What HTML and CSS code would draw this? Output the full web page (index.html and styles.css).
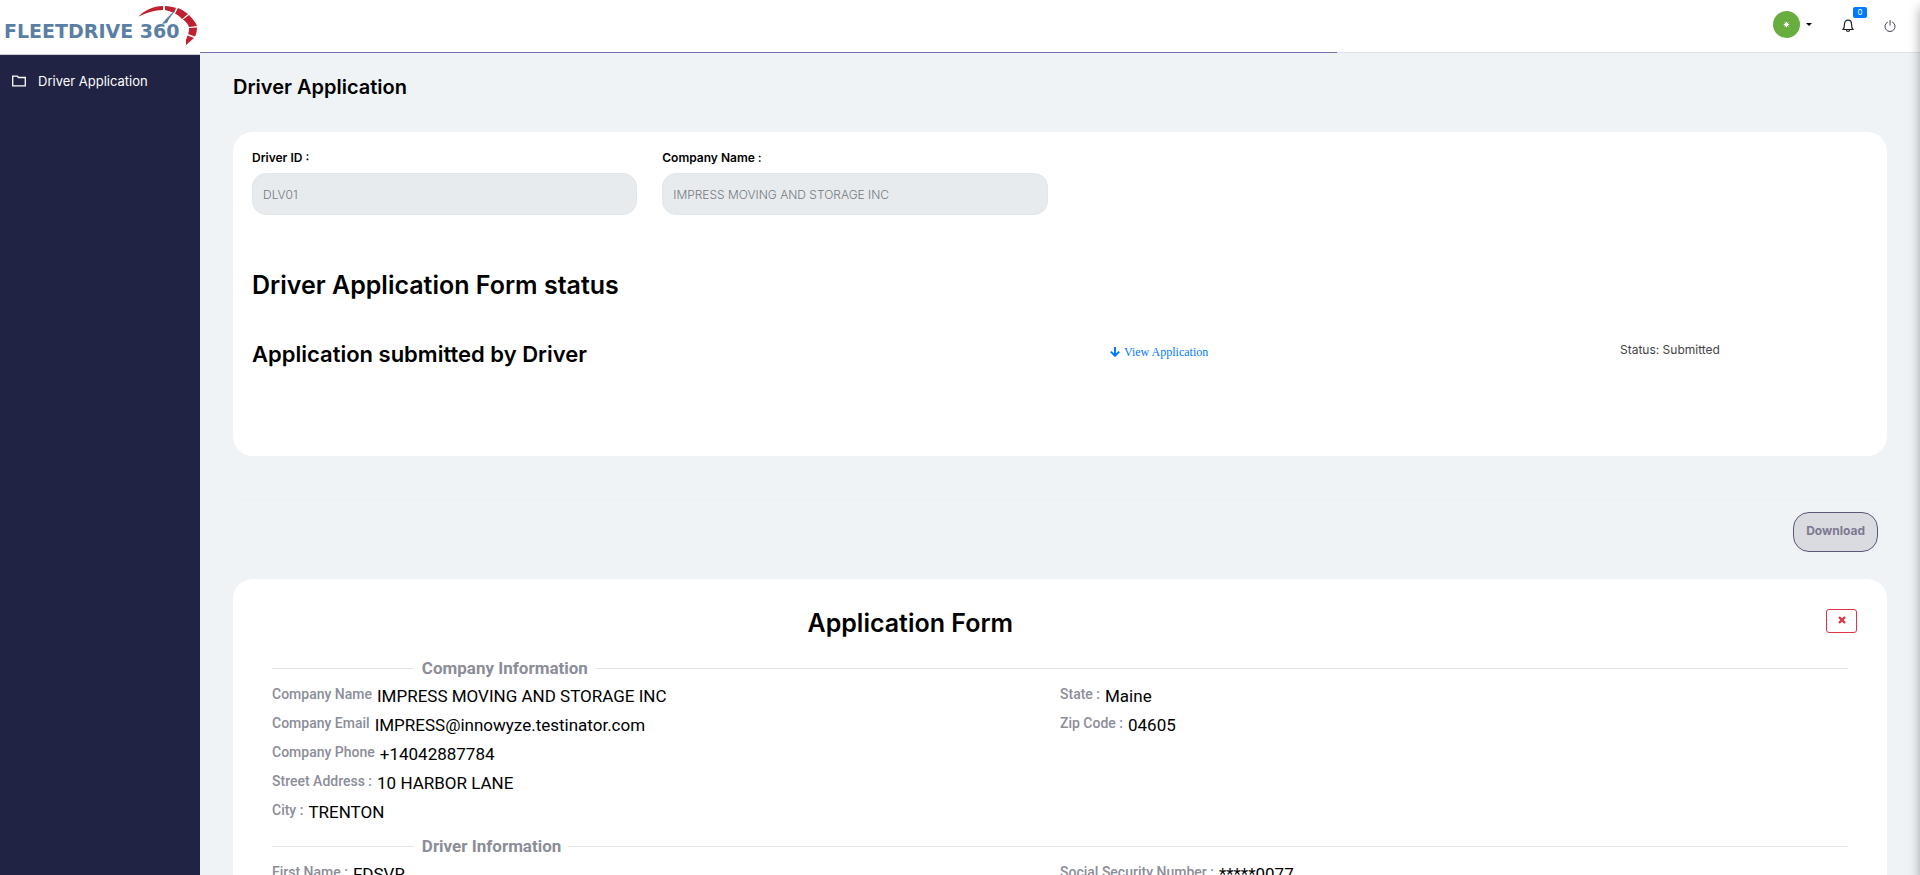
FILE: index.html
```html
<!DOCTYPE html>
<html lang="en">
<head>
<meta charset="utf-8">
<meta name="viewport" content="width=device-width, initial-scale=1">
<title>FleetDrive 360 - Driver Application</title>
<link rel="stylesheet" href="styles.css">
</head>
<body>
<div class="app">
  <aside class="sidebar">
    <a class="logo" href="#" aria-label="FleetDrive 360 home">
      <svg class="logo-gauge" viewBox="0 0 60 40" aria-hidden="true">
        <path fill="#c1202e" d="M0 12C7 5 15 1 25 1v4C16 5 8 8 0 12zM27 1c4 0 8 1 11 2l-2 5c-3-1.500-6-2.500-9-3zM40 3c4 1.500 7 4 10 6l-6 5c-2-2-4-4-7-5.500zM51 10c4 4 7 8 8 11l-8 1c-1-3-3-5-6-7.500zM51 23l8-.500c0 4-1 7-2 9l-7-2.500c1-2 1-4 1-6zM49.500 30.500l6.500 2.500-8 7v-5z"/>
        <path fill="#5a7ea4" d="M39 3L31 14l-2 4-5 1 4-5z"/>
      </svg>
      <span class="logo-text">FLEETDRIVE 360</span>
    </a>
    <nav>
      <a class="nav-item" href="#">
        <svg class="nav-icon" viewBox="0 0 14 12" aria-hidden="true"><path d="M.7 10.800V1.200h4.600l1.200 1.300h6.800v8.300z" fill="none" stroke="currentColor" stroke-width="1.300"/></svg>
        Driver Application
      </a>
    </nav>
  </aside>

  <div class="page">
    <header class="topbar">
      <div class="progress"></div>
      <button class="user" type="button" aria-label="Account menu">
        <span class="avatar"><svg viewBox="0 0 8 8" aria-hidden="true"><circle cx="4" cy="4" r="2.200" fill="#fff"/><path d="M4 .8v6.400M.8 4h6.400M1.700 1.700l4.600 4.600M6.300 1.700L1.700 6.300" stroke="#fff" stroke-width="1"/></svg></span>
        <span class="caret"></span>
      </button>
      <button class="icon-button bell" type="button" aria-label="Notifications">
        <svg viewBox="0 0 12 14" aria-hidden="true"><path d="M1 10.500c1-1 1.500-2 1.500-5.500C2.500 2.500 4 1.200 6 1.200S9.500 2.500 9.500 5c0 3.500.5 4.500 1.500 5.500zM4.500 11c0 2 3 2 3 0" fill="none" stroke="#222" stroke-width="1.200"/></svg>
        <span class="badge">0</span>
      </button>
      <button class="icon-button" type="button" aria-label="Log out">
        <svg viewBox="0 0 12 14" aria-hidden="true"><path d="M3.800 3a5 5 0 1 0 4.400 0M6 1v5.500" fill="none" stroke="#434057" stroke-width="1"/></svg>
      </button>
    </header>

    <main class="content">
      <h1 class="page-title">Driver Application</h1>

      <section class="card status-card">
        <div class="fields">
          <div class="field">
            <label for="driver-id">Driver ID :</label>
            <input id="driver-id" type="text" value="DLV01" disabled>
          </div>
          <div class="field">
            <label for="company">Company Name :</label>
            <input id="company" type="text" value="IMPRESS MOVING AND STORAGE INC" disabled>
          </div>
        </div>
        <h2 class="status-title">Driver Application Form status</h2>
        <div class="status-row">
          <h3 class="status-name">Application submitted by Driver</h3>
          <a class="view-link" href="#form"><svg viewBox="0 0 10 10" aria-hidden="true"><path d="M5 0v8M.8 4.600L5 8.800l4.200-4.200" fill="none" stroke="currentColor" stroke-width="2"/></svg>View Application</a>
          <span class="status-value">Status: Submitted</span>
        </div>
      </section>

      <div class="actions">
        <button class="download" type="button" disabled>Download</button>
      </div>

      <section class="card form-card" id="form">
        <div class="form-head">
          <h2 class="form-title">Application Form</h2>
          <button class="close" type="button" aria-label="Close"><svg viewBox="0 0 8 8" aria-hidden="true"><path d="M1 1l6 6M7 1L1 7" stroke="currentColor" stroke-width="2.400"/></svg></button>
        </div>

        <h3 class="divider">Company Information</h3>
        <div class="details">
          <dl>
            <div class="row"><dt>Company Name</dt><dd>IMPRESS MOVING AND STORAGE INC</dd></div>
            <div class="row"><dt>Company Email</dt><dd>IMPRESS@innowyze.testinator.com</dd></div>
            <div class="row"><dt>Company Phone</dt><dd>+14042887784</dd></div>
            <div class="row"><dt>Street Address :</dt><dd>10 HARBOR LANE</dd></div>
            <div class="row"><dt>City :</dt><dd>TRENTON</dd></div>
          </dl>
          <dl>
            <div class="row"><dt>State :</dt><dd>Maine</dd></div>
            <div class="row"><dt>Zip Code :</dt><dd>04605</dd></div>
          </dl>
        </div>

        <h3 class="divider">Driver Information</h3>
        <div class="details">
          <dl>
            <div class="row"><dt>First Name :</dt><dd>FDSVR</dd></div>
          </dl>
          <dl>
            <div class="row"><dt>Social Security Number :</dt><dd>*****0077</dd></div>
          </dl>
        </div>
      </section>
    </main>
  </div>
  <div class="edge-shadow"></div>
</div>
</body>
</html>
```
FILE: styles.css
```css
* { box-sizing: border-box; }

body, h1, h2, h3, dl, dd { margin: 0; }

body {
  font-family: Inter, "Open Sans", sans-serif;
  color: #000;
  background: #eff3f6;
}

a { text-decoration: none; }

button {
  font-family: inherit;
  padding: 0;
  border: 0;
  background: none;
}

h1, h2, h3 { font-weight: 600; }

.app {
  position: relative;
  display: flex;
  height: 100vh;
  overflow: hidden;
}

/* Sidebar */
.sidebar {
  flex: 0 0 200px;
  background: #202344;
}

.logo {
  position: relative;
  display: flex;
  height: 55px;
  padding: 20px 4px 0;
  background: #fff;
  border-bottom: 1px solid #ccc;
}

.logo-text {
  font: bold 19px/22px "DejaVu Sans", sans-serif;
  color: #5a7ea4;
  white-space: nowrap;
}

.logo-gauge {
  position: absolute;
  top: 5px;
  left: 138px;
  width: 60px;
  height: 40px;
}

.nav-item {
  display: flex;
  align-items: center;
  gap: 12px;
  height: 51px;
  padding: 0 12px;
  font-size: 13px;
  color: #fff;
}

.nav-icon {
  width: 14px;
  height: 12px;
}

/* Top bar */
.page {
  display: flex;
  flex: 1;
  flex-direction: column;
  min-width: 0;
}

.topbar {
  position: relative;
  display: flex;
  flex: none;
  align-items: center;
  justify-content: flex-end;
  gap: 30px;
  height: 53px;
  padding: 0 24px 3px 0;
  background: #fff;
  border-bottom: 1px solid #dbe2ea;
}

.progress {
  position: absolute;
  bottom: -1px;
  left: 0;
  width: 66.1%;
  height: 1px;
  background: #7474aa;
}

.user {
  display: flex;
  align-items: center;
  gap: 6px;
}

.avatar {
  display: grid;
  place-items: center;
  width: 27px;
  height: 27px;
  border-radius: 50%;
  background: #67ad3f;
}

.avatar svg {
  width: 7px;
  height: 7px;
}

.caret {
  border: 3px solid transparent;
  border-top-color: #000;
  border-bottom: 0;
}

.icon-button {
  position: relative;
  display: flex;
  padding-top: 2px;
}

.icon-button svg {
  width: 12px;
  height: 14px;
}

.badge {
  position: absolute;
  top: -10px;
  left: 11px;
  width: 14px;
  border-radius: 2px;
  font-size: 8px;
  line-height: 11px;
  text-align: center;
  color: #fff;
  background: #007bff;
}

/* Content */
.content {
  flex: 1;
  min-height: 0;
  padding: 22px 33px 0;
  overflow: auto;
  scrollbar-width: none;
}

.page-title {
  margin-bottom: 33px;
  font-size: 20px;
  line-height: 24px;
}

.card {
  border-radius: 20px;
  background: #fff;
}

.status-card {
  min-height: 324px;
  padding: 17px 19px;
}

.fields {
  display: grid;
  grid-template-columns: repeat(4, 1fr);
  gap: 25px;
}

.field label {
  display: block;
  margin-bottom: 6px;
  font-size: 12px;
  font-weight: 600;
  line-height: 18px;
}

.field input {
  display: block;
  width: 100%;
  height: 42px;
  padding: 0 10px;
  border: 1px solid #e1e7ec;
  border-radius: 14px;
  font: 300 12px Inter, "Open Sans", sans-serif;
  color: #77797e;
  background: #e7ebee;
}

.status-title {
  margin: 54px 0 37px;
  font-size: 25px;
  line-height: 32px;
}

.status-row {
  display: grid;
  grid-template-columns: 858fr 510fr 248fr;
  align-items: center;
}

.status-name {
  font-size: 22px;
  line-height: 32px;
}

.view-link {
  display: flex;
  align-items: center;
  gap: 4px;
  padding-bottom: 4px;
  font: 12px/20px "Liberation Serif", serif;
  color: #007bff;
}

.view-link svg {
  width: 10px;
  height: 10px;
}

.status-value {
  padding-bottom: 9px;
  font-size: 12px;
  color: #444;
}

.actions {
  display: flex;
  justify-content: flex-end;
  margin-top: 43px;
  padding: 12px 9px 27px;
  border-top: 1px solid #edf0f3;
}

.download {
  height: 40px;
  padding: 0 12px 3px;
  border: 1px solid #5a5878;
  border-radius: 16px;
  font-size: 12px;
  font-weight: 700;
  color: #7a7990;
  background: #dadbe1;
}

.form-card { padding: 28px 39px; }

.form-head {
  display: grid;
  grid-template-columns: 81fr 19fr;
  margin-bottom: 19px;
}

.form-title {
  font-size: 25px;
  line-height: 32px;
  text-align: center;
}

.close {
  display: grid;
  place-items: center;
  justify-self: end;
  width: 31px;
  height: 24px;
  margin: 2px -9px 0 0;
  padding-bottom: 2px;
  border: 1px solid #dc3545;
  border-radius: 3px;
  color: #dc3545;
}

.close svg {
  width: 8px;
  height: 8px;
}

.divider {
  display: flex;
  align-items: center;
  gap: 8px;
  margin-bottom: 3px;
  font: 700 17px/20px Roboto, sans-serif;
  color: #8b8d98;
}

.divider::before,
.divider::after {
  width: 9%;
  height: 1px;
  background: #e3e4e6;
  content: "";
}

.divider::after { flex: 1; }

.details {
  display: grid;
  grid-template-columns: 1fr 1fr;
  margin-bottom: 10px;
  font-family: Roboto, sans-serif;
}

.row {
  display: flex;
  gap: 5px;
  height: 29px;
}

.row dt {
  font-size: 14px;
  font-weight: 500;
  line-height: 26px;
  color: #8b8d98;
}

.row dd {
  font-size: 17px;
  line-height: 30px;
}

/* Shadow cast by the panel parked beyond the right edge */
.edge-shadow {
  position: absolute;
  top: 0;
  bottom: 0;
  left: 100%;
  width: 20px;
  box-shadow: 0 8px 12px rgba(0, 0, 0, .35);
}
```
